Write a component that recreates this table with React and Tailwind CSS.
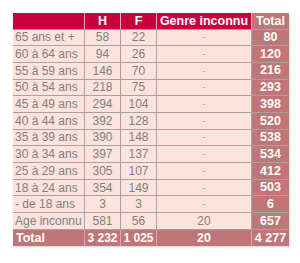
import React from "react";

const rows = [
  ["65 ans et +", "58", "22", "-", "80"],
  ["60 à 64 ans", "94", "26", "-", "120"],
  ["55 à 59 ans", "146", "70", "-", "216"],
  ["50 à 54 ans", "218", "75", "-", "293"],
  ["45 à 49 ans", "294", "104", "-", "398"],
  ["40 à 44 ans", "392", "128", "-", "520"],
  ["35 à 39 ans", "390", "148", "-", "538"],
  ["30 à 34 ans", "397", "137", "-", "534"],
  ["25 à 29 ans", "305", "107", "-", "412"],
  ["18 à 24 ans", "354", "149", "-", "503"],
  ["- de 18 ans", "3", "3", "-", "6"],
  ["Age inconnu", "581", "56", "20", "657"],
];

export default function App() {
  return (
    <div className="w-[300px] h-[263px] bg-white pt-[13px] pl-[13px]" style={{ fontFamily: '"Liberation Sans", Arial, sans-serif' }}>
      <div className="w-[276px] shadow-[1px_1px_2px_rgba(0,0,0,0.18)] text-[12px] leading-none">
        <div className="flex h-[16.5px] bg-[#c8003c] text-white font-bold text-[12.5px] border-b border-[#a8a0a0]">
          <div className="w-[72px] border-r border-[#e8b0bc]"></div>
          <div className="w-[36px] border-r border-[#e8b0bc] flex items-center justify-center">H</div>
          <div className="w-[36px] border-r border-[#e8b0bc] flex items-center justify-center">F</div>
          <div className="w-[95px] border-r border-[#e8b0bc] flex items-center justify-center">Genre inconnu</div>
          <div className="w-[37px] bg-[#c07576] flex items-center justify-center">Total</div>
        </div>
        {rows.map((r, i) => (
          <div key={i} className="flex h-[16.7px] bg-[#fde3dc] text-[#7f7f7f] border-b border-[#a6a2a2]">
            <div className="w-[72px] border-r border-[#a6a2a2] flex items-center pl-[2px] whitespace-nowrap">{r[0]}</div>
            <div className="w-[36px] border-r border-[#a6a2a2] flex items-center justify-center">{r[1]}</div>
            <div className="w-[36px] border-r border-[#a6a2a2] flex items-center justify-center">{r[2]}</div>
            <div className={"w-[95px] border-r border-[#a6a2a2] flex items-center justify-center " + (r[3] === "-" ? "text-[#b0a8a8] text-[10px]" : "")}>{r[3]}</div>
            <div className="w-[37px] bg-[#c07576] text-white font-bold text-[12.5px] flex items-center justify-center">{r[4]}</div>
          </div>
        ))}
        <div className="flex h-[16.7px] bg-[#c07576] text-white font-bold">
          <div className="w-[72px] border-r border-[#d8aaaa] flex items-center pl-[3px] text-[12.5px]">Total</div>
          <div className="w-[36px] border-r border-[#d8aaaa] flex items-center justify-center whitespace-nowrap">3 232</div>
          <div className="w-[36px] border-r border-[#d8aaaa] flex items-center justify-center whitespace-nowrap">1 025</div>
          <div className="w-[95px] border-r border-[#d8aaaa] flex items-center justify-center text-[12.5px]">20</div>
          <div className="w-[37px] flex items-center justify-center whitespace-nowrap text-[12.5px]">4 277</div>
        </div>
      </div>
    </div>
  );
}
